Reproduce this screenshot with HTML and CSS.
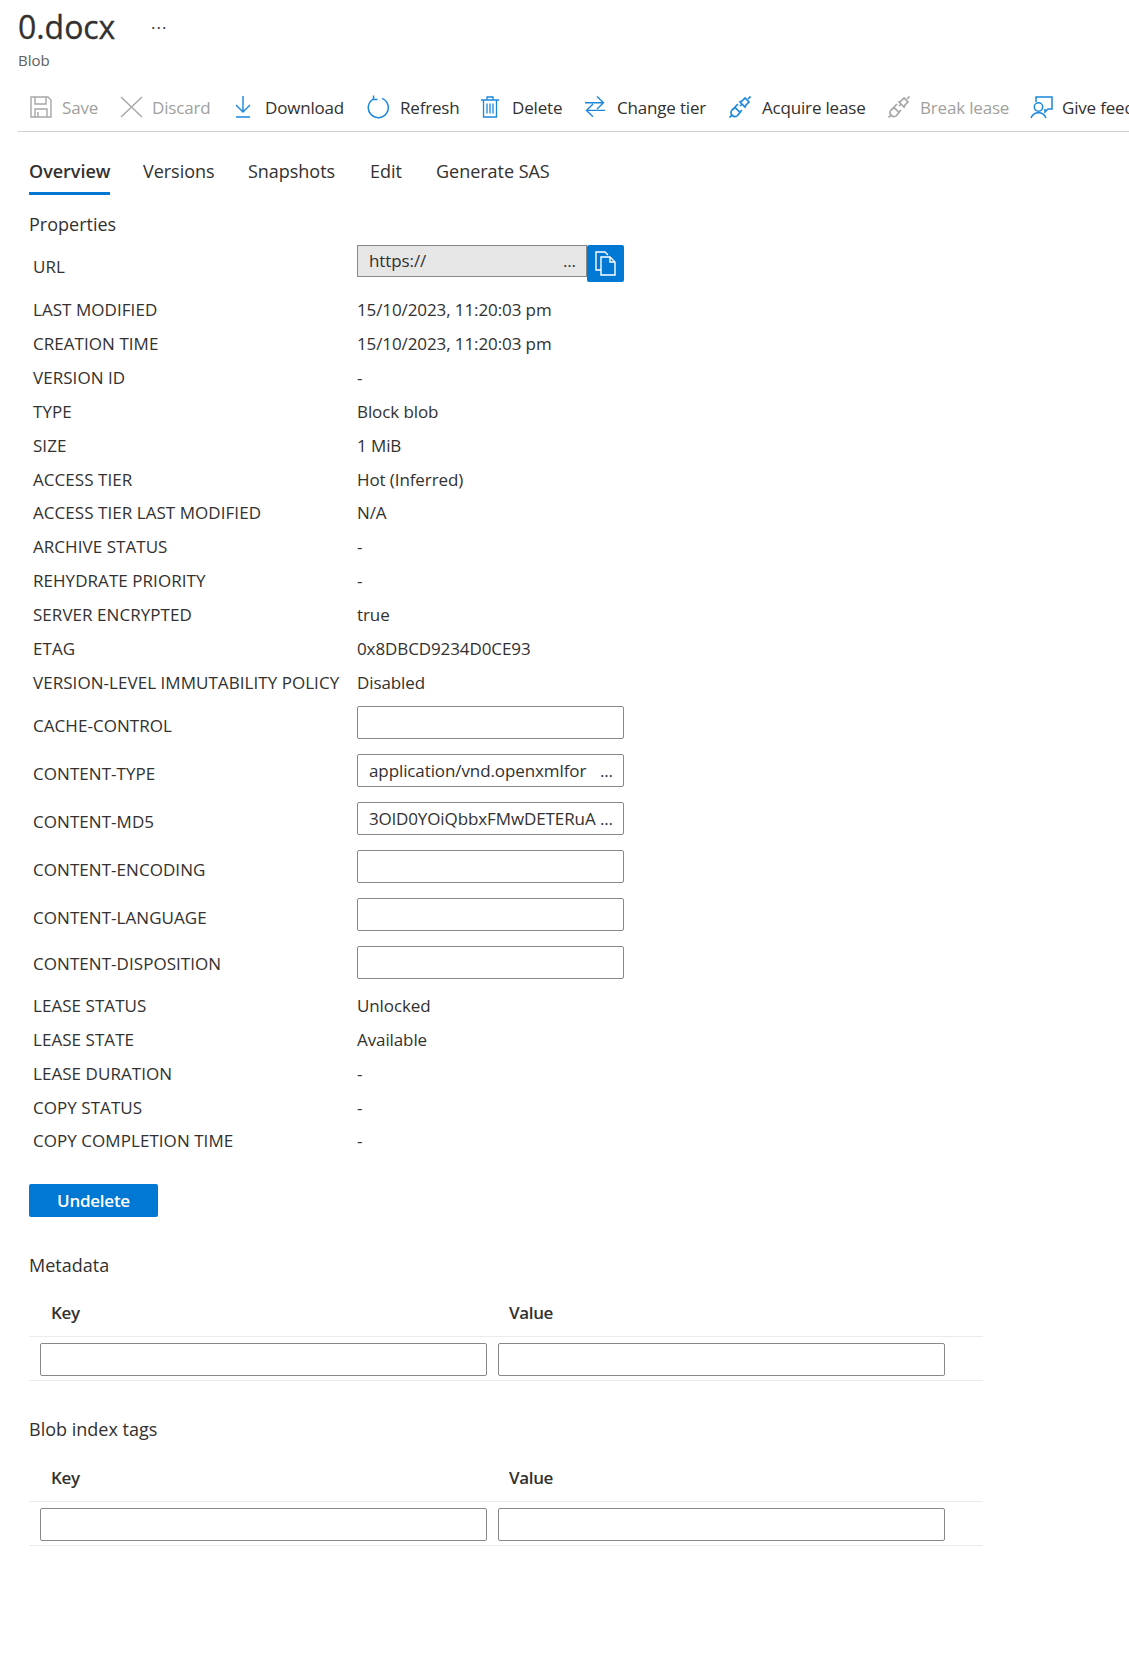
FILE: index.html
```html
<!DOCTYPE html>
<html lang="en">
<head>
    <meta charset="UTF-8">
    <title>0.docx - Blob</title>
    <link rel="stylesheet" href="styles.css">
</head>
<body>
    <div class="header">
        <div class="title-row">
            <h1>0.docx</h1>
            <span class="more">...</span>
        </div>
        <div class="subtitle">Blob</div>
    </div>

    <div class="toolbar">
        <div class="tool tool-save disabled">
            <svg width="24" height="22" viewBox="0 0 24 22" fill="none" stroke="#a6a6a6" stroke-width="1.4"><path d="M2 1h17l3 3v17H2zM6 1v7h11V1M6 21v-8h12v8M9 21v-5"/></svg>
            <span>Save</span>
        </div>
        <div class="tool tool-discard disabled">
            <svg width="23" height="22" viewBox="0 0 23 22" fill="none" stroke="#a6a6a6" stroke-width="1.4"><path d="M1 1l21 20M22 1L1 21"/></svg>
            <span>Discard</span>
        </div>
        <div class="tool tool-download">
            <svg width="18" height="22" viewBox="0 0 18 22" fill="none" stroke="#1b87dc" stroke-width="1.4"><path d="M9 0v16M2 9l7 7 7-7M2 21h14"/></svg>
            <span>Download</span>
        </div>
        <div class="tool tool-refresh">
            <svg width="24" height="24" viewBox="0 0 24 24" fill="none" stroke="#1b87dc" stroke-width="1.5"><path d="M15 3.400a10 10 0 1 1-8.500.5M6.500 0.500v4h4"/></svg>
            <span>Refresh</span>
        </div>
        <div class="tool tool-delete">
            <svg width="18" height="22" viewBox="0 0 18 22" fill="none" stroke="#1b87dc" stroke-width="1.3"><path d="M0 4h18M2.500 4v17h13V4M6 4V1h6v3M6 7.500v10M9 7.500v10M12 7.500v10"/></svg>
            <span>Delete</span>
        </div>
        <div class="tool tool-tier">
            <svg width="20" height="22" viewBox="0 0 20 22" fill="none" stroke="#1b87dc" stroke-width="1.4"><path d="M0 6.700h18.500M12 0.500l6.500 6.200-6.500 6.300M20 14.400H1.500M8 8l-6.500 6.400 6.500 6.300"/></svg>
            <span>Change tier</span>
        </div>
        <div class="tool tool-acquire">
            <svg width="22" height="22" viewBox="0 0 22 22" fill="none" stroke="#1b87dc" stroke-width="1.7"><path d="M0.500 21.500l2.500-2.500M21.500 0.500L19 3M3 19a3.500 3.500 0 0 1 0-5l3-2.500 5 5-2.500 3a3.500 3.500 0 0 1-5.500-.5zM11 10l2-2M13 5l3-3 4 4-3 3-1 2-5-5z"/><path d="M6 11l3-3M11 16l2-2"/></svg>
            <span>Acquire lease</span>
        </div>
        <div class="tool tool-break disabled">
            <svg width="22" height="22" viewBox="0 0 22 22" fill="none" stroke="#a6a6a6" stroke-width="1.7"><path d="M0.500 21.500l2.500-2.500M21.500 0.500L19 3M3 19a3.500 3.500 0 0 1 0-5l3-2.500 5 5-2.500 3a3.500 3.500 0 0 1-5.500-.5zM11 10l2-2M13 5l3-3 4 4-3 3-1 2-5-5z"/><path d="M6 11l3-3M11 16l2-2"/></svg>
            <span>Break lease</span>
        </div>
        <div class="tool tool-feedback">
            <svg width="23" height="23" viewBox="0 0 23 23" fill="none" stroke="#1b87dc" stroke-width="1.5"><path d="M6 6V1h16v12h-4l-3 3v-3M1 22a8 8 0 0 1 15 0"/><circle cx="8.500" cy="11" r="4.200"/></svg>
            <span>Give feedback</span>
        </div>
    </div>

    <div class="tabs">
        <div class="tab tab-overview active">Overview</div>
        <div class="tab tab-versions">Versions</div>
        <div class="tab tab-snapshots">Snapshots</div>
        <div class="tab tab-edit">Edit</div>
        <div class="tab tab-sas">Generate SAS</div>
    </div>

    <div class="section-title properties-title">Properties</div>

    <div class="props">
        <div class="prop-row url-row">
            <div class="prop-label">URL</div>
            <div class="url-box"><span>https://</span><span>...</span></div>
            <div class="copy-btn">
                <svg width="21" height="25" viewBox="0 0 21 25" fill="none" stroke="#fff" stroke-width="1.4"><path d="M6 19H1V1h9l3 3M6 6h9l5 5v13H6zM15 6v5h5"/></svg>
            </div>
        </div>

        <div class="prop-row"><div class="prop-label">LAST MODIFIED</div><div>15/10/2023, 11:20:03 pm</div></div>
        <div class="prop-row"><div class="prop-label">CREATION TIME</div><div>15/10/2023, 11:20:03 pm</div></div>
        <div class="prop-row"><div class="prop-label">VERSION ID</div><div>-</div></div>
        <div class="prop-row"><div class="prop-label">TYPE</div><div>Block blob</div></div>
        <div class="prop-row"><div class="prop-label">SIZE</div><div>1 MiB</div></div>
        <div class="prop-row"><div class="prop-label">ACCESS TIER</div><div>Hot (Inferred)</div></div>
        <div class="prop-row"><div class="prop-label">ACCESS TIER LAST MODIFIED</div><div>N/A</div></div>
        <div class="prop-row"><div class="prop-label">ARCHIVE STATUS</div><div>-</div></div>
        <div class="prop-row"><div class="prop-label">REHYDRATE PRIORITY</div><div>-</div></div>
        <div class="prop-row"><div class="prop-label">SERVER ENCRYPTED</div><div>true</div></div>
        <div class="prop-row"><div class="prop-label">ETAG</div><div>0x8DBCD9234D0CE93</div></div>
        <div class="prop-row"><div class="prop-label">VERSION-LEVEL IMMUTABILITY POLICY</div><div>Disabled</div></div>

        <div class="input-rows">
            <div class="input-row"><div class="prop-label">CACHE-CONTROL</div><div class="text-box"></div></div>
            <div class="input-row"><div class="prop-label">CONTENT-TYPE</div><div class="text-box"><span>application/vnd.openxmlfor</span><span>...</span></div></div>
            <div class="input-row"><div class="prop-label">CONTENT-MD5</div><div class="text-box"><span>3OlD0YOiQbbxFMwDETERuA</span><span>...</span></div></div>
            <div class="input-row"><div class="prop-label">CONTENT-ENCODING</div><div class="text-box"></div></div>
            <div class="input-row"><div class="prop-label">CONTENT-LANGUAGE</div><div class="text-box"></div></div>
            <div class="input-row"><div class="prop-label">CONTENT-DISPOSITION</div><div class="text-box"></div></div>
        </div>

        <div class="prop-row"><div class="prop-label">LEASE STATUS</div><div>Unlocked</div></div>
        <div class="prop-row"><div class="prop-label">LEASE STATE</div><div>Available</div></div>
        <div class="prop-row"><div class="prop-label">LEASE DURATION</div><div>-</div></div>
        <div class="prop-row"><div class="prop-label">COPY STATUS</div><div>-</div></div>
        <div class="prop-row"><div class="prop-label">COPY COMPLETION TIME</div><div>-</div></div>
    </div>

    <button class="undelete">Undelete</button>

    <div class="section-title metadata-title">Metadata</div>
    <div class="kv-head"><div>Key</div><div>Value</div></div>
    <div class="kv-body"><div class="kv-input"></div><div class="kv-input"></div></div>

    <div class="section-title tags-title">Blob index tags</div>
    <div class="kv-head"><div>Key</div><div>Value</div></div>
    <div class="kv-body"><div class="kv-input"></div><div class="kv-input"></div></div>
</body>
</html>
```

FILE: styles.css
```css
body {
    font-family: "Open Sans", "Liberation Sans", sans-serif;
    font-size: 17px;
    letter-spacing: -0.1px;
    color: #323130;
    margin: 0;
    height: 1659px;
    overflow: hidden;
    background: #fff;
}

.header {
    padding-left: 18px;
    height: 85px;
}

.title-row {
    display: flex;
    align-items: flex-start;
    height: 50px;
}

h1 {
    margin: 0;
    font-size: 32px;
    font-weight: 400;
    letter-spacing: -0.05px;
    line-height: 54px;
    width: 133px;
    -webkit-text-stroke: 0.3px #323130;
}

.more {
    font-size: 17px;
    letter-spacing: 1px;
    line-height: 46px;
}

.subtitle {
    font-size: 15px;
    letter-spacing: 0;
    color: #605e5c;
    line-height: 20px;
}

.toolbar {
    display: flex;
    align-items: center;
    height: 44px;
    padding-bottom: 2px;
    margin-left: 18px;
    border-bottom: 1px solid #d2d0ce;
    overflow: hidden;
    white-space: nowrap;
    letter-spacing: -0.18px;
}

.tool {
    display: flex;
    align-items: center;
    flex: none;
    gap: 10px;
}

.tool.disabled {
    color: #a19f9d;
}

.tool svg {
    flex: none;
}

.tool-save { margin-left: 11px; width: 91px; gap: 9px; }
.tool-discard { width: 111px; gap: 9px; }
.tool-download { width: 136px; padding-left: 3px; box-sizing: border-box; gap: 13px; }
.tool-refresh { width: 114px; gap: 9px; }
.tool-delete { width: 104px; gap: 13px; }
.tool-tier { width: 144px; gap: 12px; }
.tool-acquire { width: 159px; gap: 11px; }
.tool-break { width: 142px; gap: 10px; }
.tool-feedback { gap: 9px; }

.tabs {
    display: flex;
    height: 65px;
    margin-left: 29px;
    font-size: 18px;
    letter-spacing: -0.03px;
}

.tab {
    flex: none;
    height: 63px;
    line-height: 78px;
    box-sizing: border-box;
}

.tab-overview { width: 81px; font-weight: 600; margin-right: 33px; }
.tab-versions { width: 105px; }
.tab-snapshots { width: 122px; }
.tab-edit { width: 66px; }

.tab.active {
    border-bottom: 3px solid #0078d4;
}

.section-title {
    margin-left: 29px;
    font-size: 18px;
    letter-spacing: 0;
    line-height: 24px;
}

.properties-title {
    margin-top: 15px;
}

.props {
    margin-left: 33px;
}

.prop-row {
    display: flex;
    align-items: center;
    height: 33.85px;
}

.prop-label {
    flex: none;
    width: 324px;
    letter-spacing: 0.05px;
}

.url-row {
    height: 48px;
    align-items: flex-start;
    margin-top: 9px;
}

.url-row .prop-label {
    line-height: 34px;
    padding-top: 5px;
}

.url-box {
    box-sizing: border-box;
    display: flex;
    justify-content: space-between;
    align-items: center;
    width: 230px;
    height: 32px;
    padding: 0 10px 2px 11px;
    background: #e6e6e6;
    border: 1px solid #8a8886;
}

.copy-btn {
    display: flex;
    align-items: center;
    justify-content: center;
    width: 37px;
    height: 37px;
    background: #0078d4;
    border-radius: 2px;
}

.input-rows {
    padding-top: 7px;
}

.input-row {
    display: flex;
    height: 48px;
}

.input-row:last-child {
    height: 42.5px;
}

.input-row .prop-label {
    line-height: 39px;
}

.input-row:last-child .prop-label {
    line-height: 36px;
}

.text-box {
    box-sizing: border-box;
    display: flex;
    justify-content: space-between;
    align-items: center;
    width: 267px;
    height: 33px;
    padding: 0 10px 0 11px;
    border: 1px solid #8a8886;
    border-radius: 2px;
}

.undelete {
    display: block;
    width: 129px;
    height: 33px;
    margin: 26.500px 0 0 29px;
    padding: 0;
    border: none;
    border-radius: 2px;
    background: #0078d4;
    color: #fff;
    font: 600 17px "Open Sans", "Liberation Sans", sans-serif;
    letter-spacing: -0.25px;
}

.metadata-title {
    margin-top: 36px;
}

.tags-title {
    margin-top: 36px;
    margin-bottom: 1px;
}

.kv-head {
    display: flex;
    height: 60px;
    margin-left: 29px;
    width: 954px;
    box-sizing: border-box;
    padding-left: 22px;
    align-items: flex-end;
    padding-bottom: 12px;
    font-weight: 600;
    letter-spacing: -0.35px;
    border-bottom: 1px solid #edebe9;
}

.kv-head div {
    flex: none;
    width: 458px;
}

.kv-body {
    display: flex;
    gap: 11px;
    box-sizing: border-box;
    height: 44px;
    margin-left: 29px;
    width: 954px;
    padding: 6px 0 0 11px;
    border-bottom: 1px solid #edebe9;
}

.kv-input {
    box-sizing: border-box;
    width: 447px;
    height: 33px;
    border: 1px solid #8a8886;
    border-radius: 2px;
}
```
